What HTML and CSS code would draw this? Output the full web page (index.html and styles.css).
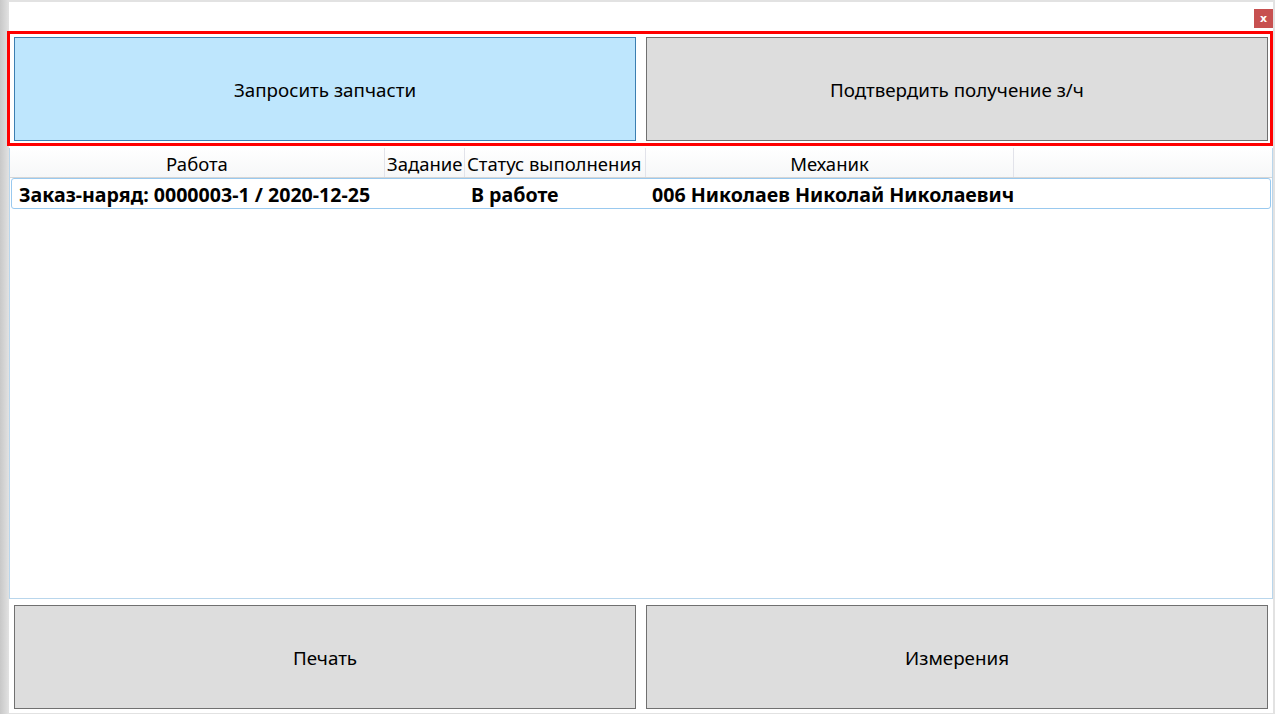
FILE: index.html
```html
<!DOCTYPE html>
<html lang="ru">
<head>
    <meta charset="UTF-8">
    <title>Запчасти</title>
    <link rel="stylesheet" href="styles.css">
</head>
<body>
    <div class="window">
        <div class="title-bar">
            <button class="close-btn">x</button>
        </div>

        <div class="top-panel">
            <button class="big-btn active">Запросить запчасти</button>
            <button class="big-btn">Подтвердить получение з/ч</button>
        </div>

        <div class="grid">
            <div class="grid-head">
                <div class="col col-work">Работа</div>
                <div class="col col-task">Задание</div>
                <div class="col col-status">Статус выполнения</div>
                <div class="col col-mech">Механик</div>
                <div class="col col-rest"></div>
            </div>
            <div class="grid-row">
                <div class="cell cell-work">Заказ-наряд: 0000003-1 / 2020-12-25</div>
                <div class="cell cell-status">В работе</div>
                <div class="cell cell-mech">006 Николаев Николай Николаевич</div>
            </div>
        </div>

        <div class="bottom-panel">
            <button class="big-btn">Печать</button>
            <button class="big-btn">Измерения</button>
        </div>
    </div>
</body>
</html>
```

FILE: styles.css
```css
html, body {
    margin: 0;
    height: 100%;
}

body {
    background: linear-gradient(to right, #c8c8c8, #e2e2e2 9px, #e2e2e2);
    padding: 2px 2px 0 9px;
    box-sizing: border-box;
    overflow: hidden;
    font-family: "Noto Sans", "Open Sans", sans-serif;
    color: #000;
}

.window {
    background: #fff;
    width: 1264px;
    height: 711px;
    display: flex;
    flex-direction: column;
}

.title-bar {
    height: 29px;
    display: flex;
    justify-content: flex-end;
    align-items: flex-start;
}

.close-btn {
    margin-top: 7px;
    width: 19px;
    height: 19px;
    padding: 0;
    border: none;
    background: #c75050;
    color: #fff;
    font-family: "DejaVu Sans", sans-serif;
    font-size: 11px;
    font-weight: bold;
    line-height: 17px;
}

.top-panel {
    margin-left: -2px;
    width: 1266px;
    height: 115px;
    box-sizing: border-box;
    border: 3px solid #ff0000;
    padding: 3px 2px 2px 4px;
    display: flex;
    gap: 10px;
}

.big-btn {
    flex: 1;
    height: 104px;
    background: #dddddd;
    border: 1px solid #707070;
    font-family: "Noto Sans", "Open Sans", sans-serif;
    font-size: 18.8px;
    color: #000;
    padding: 2px 0 0 0;
}

.big-btn.active {
    background: #bee6fd;
    border-color: #3c7fb1;
}

.grid {
    flex: 1;
    margin-top: 2px;
    border: 1px solid #b9d6ec;
    border-top: none;
    display: flex;
    flex-direction: column;
}

.grid-head {
    display: flex;
    height: 29px;
    background: linear-gradient(to bottom, #ffffff, #f6f7f8);
    border-bottom: 1px solid #d5d5d5;
}

.col {
    font-size: 18.5px;
    line-height: 31px;
    text-align: center;
    border-right: 1px solid #e2e3ea;
    white-space: nowrap;
    overflow: hidden;
}

.col-work { width: 374px; }
.col-task { width: 80px; text-align: left; padding-left: 2px; box-sizing: border-box; }
.col-status { width: 181px; text-align: left; padding-left: 2px; box-sizing: border-box; }
.col-mech { width: 367px; }
.col-rest { flex: 1; border-right: none; }

.grid-row {
    margin: 0 1px 0 1px;
    height: 31px;
    box-sizing: border-box;
    border: 1px solid #99c9ef;
    border-radius: 3px;
    display: flex;
    align-items: center;
    font-size: 19.6px;
    font-weight: bold;
    white-space: nowrap;
    padding-top: 1px;
}

.cell-work { width: 452px; padding-left: 7px; }
.cell-status { width: 181px; }
.cell-mech { flex: 1; }

.bottom-panel {
    height: 114px;
    box-sizing: border-box;
    padding: 6px 5px 3px 5px;
    display: flex;
    gap: 10px;
}
```
